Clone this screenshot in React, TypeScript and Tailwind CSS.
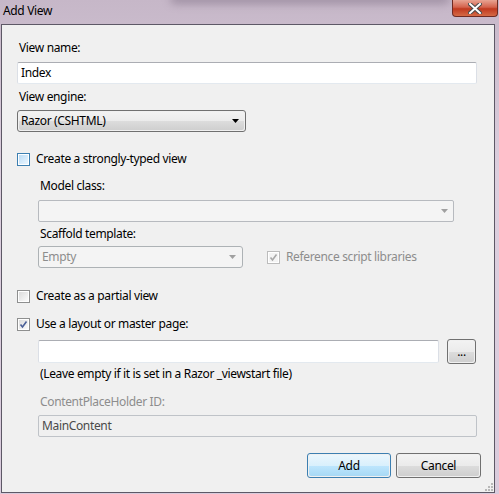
import React from 'react'

const font = { fontFamily: '"Segoe UI", "Noto Sans", sans-serif' }

function CheckBox({ checked = false, focused = false, disabled = false }: { checked?: boolean; focused?: boolean; disabled?: boolean }) {
    const border = focused ? 'border-[#3c7fb1]' : disabled ? 'border-[#bcbcbc]' : 'border-[#8e8f8f]'
    const fill = focused
        ? 'bg-gradient-to-br from-[#bcdcf5] to-[#eaf6ff]'
        : disabled
          ? 'bg-[#f4f4f4]'
          : 'bg-gradient-to-br from-[#dcdcdc] to-[#fbfbfb]'
    return (
        <div className={`w-[13px] h-[13px] border ${border} bg-white p-[1px] shrink-0`}>
            <div className={`w-full h-full ${fill} relative`}>
                {checked && (
                    <svg viewBox="0 0 9 9" className="absolute inset-0 w-[9px] h-[9px]">
                        <path
                            d="M1.5 4.5 L3.5 7 L7.5 1.5"
                            fill="none"
                            stroke={disabled ? '#a8a8a8' : '#4a5f97'}
                            strokeWidth="1.6"
                        />
                    </svg>
                )}
            </div>
        </div>
    )
}

function Arrow({ color = '#000' }: { color?: string }) {
    return (
        <svg width="7" height="4" viewBox="0 0 7 4">
            <path d="M0 0 H7 L3.5 4 Z" fill={color} />
        </svg>
    )
}

function TextBox({ value = '', className = '', disabled = false }: { value?: string; className?: string; disabled?: boolean }) {
    return (
        <div
            className={`flex items-center rounded-[2px] border px-[3px] text-[12px] ${
                disabled
                    ? 'bg-[#f0f0f0] text-[#4a4a4a] border-[#bfc3c8]'
                    : 'bg-white text-black border-[#abadb3] border-x-[#dbdfe6] border-b-[#e3e9ef]'
            } ${className}`}
        >
            {value}
        </div>
    )
}

function Button({ label, primary = false, className = '' }: { label: string; primary?: boolean; className?: string }) {
    return (
        <div
            className={`relative flex items-center justify-center rounded-[3px] border text-[12px] text-black overflow-hidden ${
                primary ? 'border-[#3c7fb1]' : 'border-[#707070]'
            } ${className}`}
        >
            <div
                className={`absolute inset-[1px] rounded-[2px] ${
                    primary
                        ? 'bg-[linear-gradient(#eaf6fd_0%,#d9f0fc_50%,#bee6fd_50%,#a7d9f5_100%)]'
                        : 'bg-[linear-gradient(#f2f2f2_0%,#ebebeb_50%,#dddddd_50%,#cfcfcf_100%)]'
                }`}
            />
            <span className="relative">{label}</span>
        </div>
    )
}

export default function App() {
    return (
        <div
            className="w-[499px] h-[494px] flex flex-col bg-[linear-gradient(180deg,#c6b7c8_0%,#dccfde_35%,#d9cbdc_100%)] overflow-hidden tracking-[-0.35px]"
            style={font}
        >
            {/* title bar */}
            <div className="h-[24px] flex items-start relative shrink-0">
                <div className="absolute left-[170px] top-[-6px] w-[280px] h-[10px] rounded-full bg-[#7a6b80] opacity-50 blur-[4px]" />
                <span className="relative pl-[3px] pt-[2px] text-[12px] text-black">Add View</span>
                <div className="ml-auto mr-[1px] w-[46px] h-[17px] relative rounded-b-[4px] border border-t-0 border-[#6f2a22] bg-[linear-gradient(#e8a493_0%,#d4624c_45%,#c0391f_55%,#d56a45_100%)] flex items-center justify-center">
                    <svg width="14" height="11" viewBox="0 0 14 11">
                        <path d="M2 1 L12 10 M12 1 L2 10" stroke="#4a4a4a" strokeWidth="4" strokeLinecap="square" />
                        <path d="M2 1 L12 10 M12 1 L2 10" stroke="#ffffff" strokeWidth="2" strokeLinecap="square" />
                    </svg>
                </div>
            </div>

            {/* client area */}
            <div className="ml-[1px] w-[494px] h-[469px] border border-[#5d5866] bg-[#f0f0f0] relative flex flex-col pl-[15px] pr-[17px] text-[12px] text-black leading-[16px]">
                <div className="mt-[15px] pl-[2px]">View name:</div>
                <TextBox value="Index" className="mt-[6px] h-[22px] w-[460px]" />

                <div className="mt-[5px] pl-[2px]">View engine:</div>
                <div className="mt-[5px] h-[22px] w-[229px] relative rounded-[3px] border border-[#707070] overflow-hidden">
                    <div className="absolute inset-[1px] rounded-[2px] bg-[linear-gradient(#f2f2f2_0%,#ebebeb_50%,#dddddd_50%,#cfcfcf_100%)]" />
                    <div className="relative h-full flex items-center pl-[3px] pr-[6px]">
                        <span>Razor (CSHTML)</span>
                        <span className="ml-auto">
                            <Arrow />
                        </span>
                    </div>
                </div>

                <div className="mt-[19px] flex items-center gap-[6px] h-[16px]">
                    <CheckBox focused />
                    <span>Create a strongly-typed view</span>
                </div>

                <div className="pl-[21px] flex flex-col">
                    <div className="mt-[11px] pl-[2px]">Model class:</div>
                    <div className="mt-[6px] h-[22px] w-[416px] rounded-[2px] border border-[#b7babf] bg-[#f4f4f4] flex">
                        <div className="flex-1" />
                        <div className="w-[17px] flex items-center justify-center">
                            <Arrow color="#a0a0a0" />
                        </div>
                    </div>

                    <div className="mt-[4px] pl-[2px]">Scaffold template:</div>
                    <div className="mt-[4px] h-[22px] flex items-center">
                        <div className="h-[22px] w-[205px] rounded-[3px] border border-[#adb2b5] bg-[#f4f4f4] flex items-center pl-[3px] pr-[6px] text-[#8d8d8d]">
                            <span>Empty</span>
                            <span className="ml-auto">
                                <Arrow color="#a0a0a0" />
                            </span>
                        </div>
                        <div className="ml-[24px] flex items-center gap-[6px] text-[#8d8d8d]">
                            <CheckBox checked disabled />
                            <span>Reference script libraries</span>
                        </div>
                    </div>
                </div>

                <div className="mt-[20px] flex items-center gap-[6px] h-[16px]">
                    <CheckBox />
                    <span>Create as a partial view</span>
                </div>

                <div className="mt-[12px] flex items-center gap-[6px] h-[16px]">
                    <CheckBox checked />
                    <span>Use a layout or master page:</span>
                </div>

                <div className="pl-[21px] flex flex-col">
                    <div className="mt-[7px] flex items-center h-[25px]">
                        <TextBox className="h-[23px] w-[401px]" />
                        <Button label="..." className="ml-[8px] h-[25px] w-[29px]" />
                    </div>
                    <div className="mt-[2px] pl-[2px]">(Leave empty if it is set in a Razor _viewstart file)</div>

                    <div className="mt-[12px] pl-[2px] text-[#8d8d8d]">ContentPlaceHolder ID:</div>
                    <TextBox value="MainContent" disabled className="mt-[5px] h-[22px] w-[439px]" />
                </div>

                <div className="mt-[16px] -mr-[4px] flex justify-end gap-[5px]">
                    <Button label="Add" primary className="h-[25px] w-[84px]" />
                    <Button label="Cancel" className="h-[25px] w-[85px]" />
                </div>

                {/* size grip */}
                <svg className="absolute right-[1px] bottom-[1px]" width="8" height="8" viewBox="0 0 8 8">
                    {[
                        [6, 0],
                        [6, 3],
                        [3, 3],
                        [6, 6],
                        [3, 6],
                        [0, 6],
                    ].map(([x, y], i) => (
                        <rect key={i} x={x} y={y} width="2" height="2" fill="#b8b8b8" />
                    ))}
                </svg>
            </div>
        </div>
    )
}
